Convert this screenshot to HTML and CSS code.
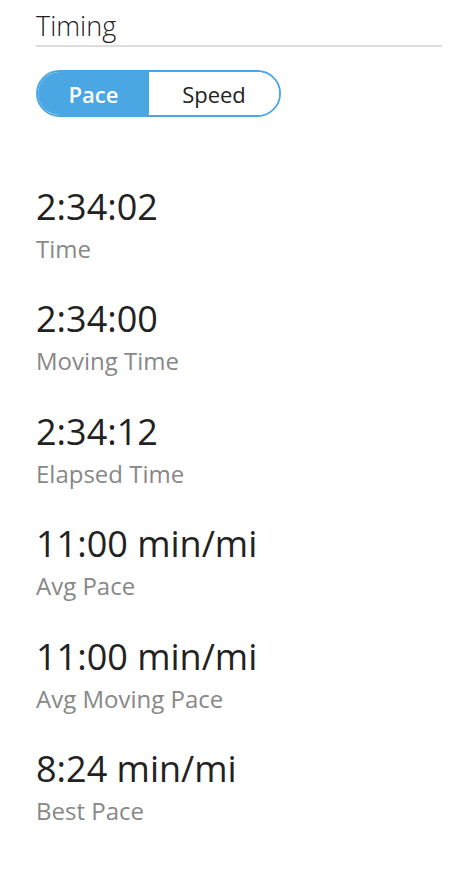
FILE: index.html
```html
<!DOCTYPE html>
<html>
<head>
<meta charset="utf-8">
<link rel="stylesheet" href="styles.css">
</head>
<body>
<div class="panel">
  <h2 class="title">Timing</h2>
  <div class="toggle">
    <button class="seg active">Pace</button>
    <button class="seg">Speed</button>
  </div>
  <ul class="stats">
    <li class="stat"><div class="value">2:34:02</div><div class="label">Time</div></li>
    <li class="stat"><div class="value">2:34:00</div><div class="label">Moving Time</div></li>
    <li class="stat"><div class="value">2:34:12</div><div class="label">Elapsed Time</div></li>
    <li class="stat"><div class="value">11:00 min/mi</div><div class="label">Avg Pace</div></li>
    <li class="stat"><div class="value">11:00 min/mi</div><div class="label">Avg Moving Pace</div></li>
    <li class="stat"><div class="value">8:24 min/mi</div><div class="label">Best Pace</div></li>
  </ul>
</div>
</body>
</html>
```
FILE: styles.css
```css
html, body { margin: 0; padding: 0; background: #fff; }
body { font-family: "Open Sans", "Noto Sans", sans-serif; color: #222; }
.panel { padding: 8px 26px 0 36px; }
.title {
  margin: 0;
  font-size: 27px;
  font-weight: 300;
  line-height: 36px;
  color: #222;
  border-bottom: 2px solid #ddd;
  padding-bottom: 1px;
}
.toggle {
  display: inline-flex;
  margin-top: 23px;
  border: 2px solid #4ba7e3;
  border-radius: 24px;
  overflow: hidden;
  height: 47px;
  box-sizing: border-box;
}
.seg {
  border: 0;
  margin: 0;
  font-family: inherit;
  font-size: 22px;
  background: #fff;
  color: #222;
  padding: 0;
  cursor: pointer;
}
.seg.active { background: #4ba7e3; color: #fff; font-weight: 600; width: 111px; }
.seg:not(.active) { width: 130px; }
.stats { list-style: none; margin: 68px 0 0; padding: 0; }
.stat { height: 112.4px; }
.value { font-size: 36px; line-height: 44px; color: #222; }
.label { font-size: 24px; line-height: 30px; color: #888; margin-top: 5px; }
```
